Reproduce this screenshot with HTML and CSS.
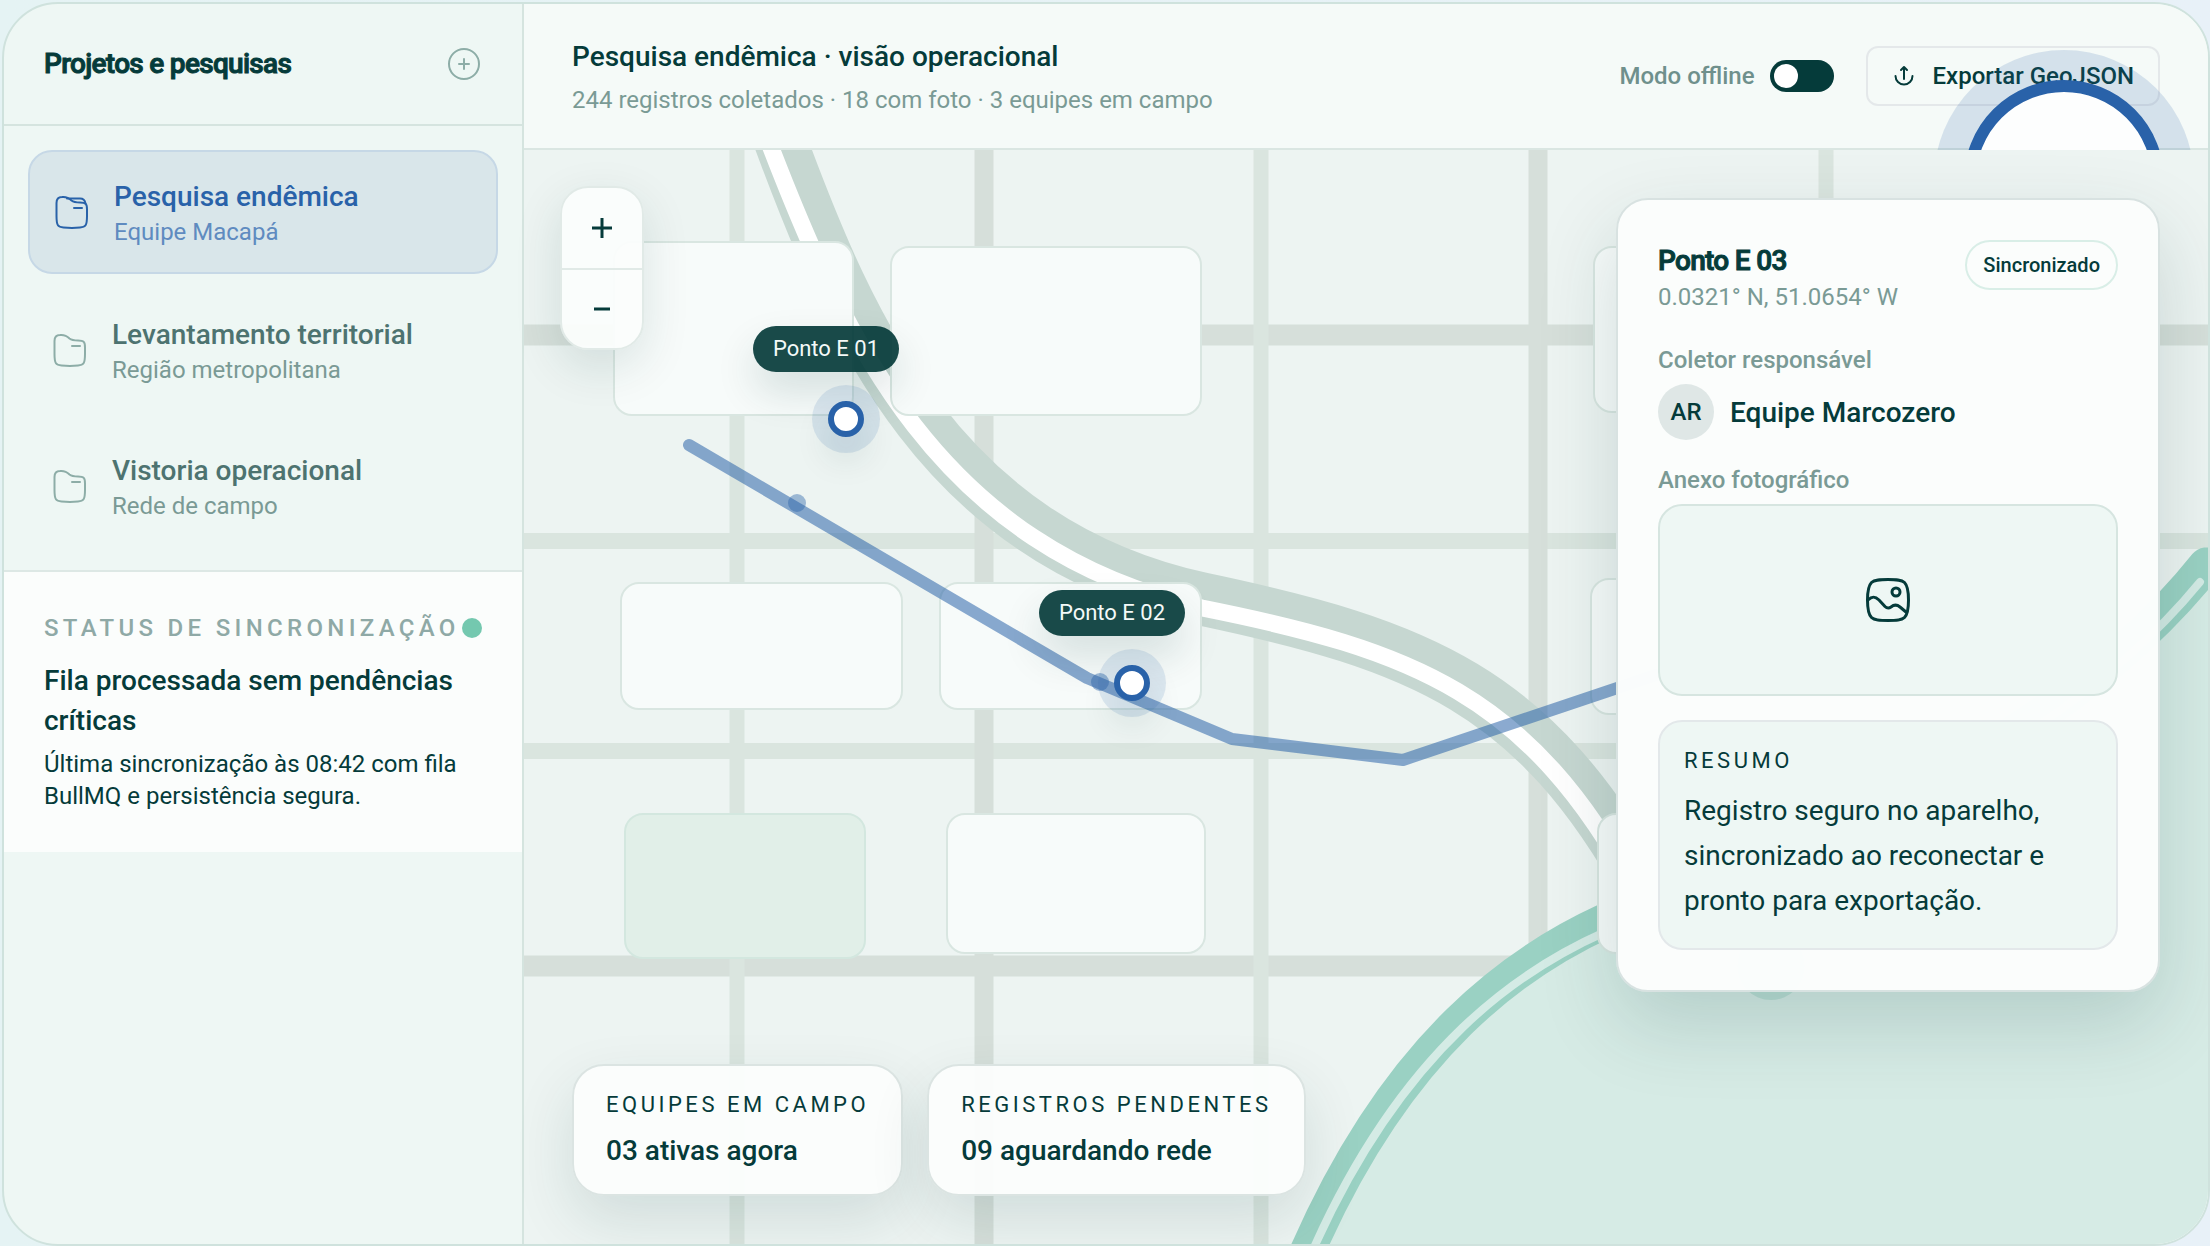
FILE: index.html
```html
<!DOCTYPE html>
<html lang="pt-BR">
<head>
<meta charset="utf-8">
<meta name="viewport" content="width=device-width, initial-scale=1">
<title>Pesquisa endêmica</title>
<link rel="stylesheet" href="styles.css">
</head>
<body>
<div class="app">
  <aside class="sidebar">
    <header class="sidebar-head">
      <h2 class="heading">Projetos e pesquisas</h2>
      <button class="icon-button" type="button" aria-label="Novo projeto">
        <svg class="icon" viewBox="0 0 36 36"><circle cx="18" cy="18" r="15"/><path d="M18 13v10M13 18h10"/></svg>
      </button>
    </header>
    <nav class="projects">
      <a class="project project-active" href="#endemica">
        <svg class="icon" viewBox="0 0 36 36"><path d="M2.500 9C2.500 5 4 3 8 3c5-.5 7 1 9.500 3.500C20 8.500 22 8.500 26 8.500c6 0 7 1.500 7 7V22c0 10-1.500 11-7 11.500-5 .5-11 .5-16.500 0C4 33 2.500 32 2.500 22z"/><path d="M13 4.500h13c4 0 5 2 5.500 5M20 14h8"/></svg>
        <span class="project-text"><span class="project-name">Pesquisa endêmica</span><span class="project-team">Equipe Macapá</span></span>
      </a>
      <a class="project" href="#territorial">
        <svg class="icon" viewBox="0 0 36 36"><path d="M2.500 9C2.500 5 4 3 8 3c5-.5 7 1 9.500 3.500C20 8.500 22 8.500 26 8.500c6 0 7 1.500 7 7V22c0 10-1.500 11-7 11.500-5 .5-11 .5-16.500 0C4 33 2.500 32 2.500 22z"/><path d="M20 14h8"/></svg>
        <span class="project-text"><span class="project-name">Levantamento territorial</span><span class="project-team">Região metropolitana</span></span>
      </a>
      <a class="project" href="#vistoria">
        <svg class="icon" viewBox="0 0 36 36"><path d="M2.500 9C2.500 5 4 3 8 3c5-.5 7 1 9.500 3.500C20 8.500 22 8.500 26 8.500c6 0 7 1.500 7 7V22c0 10-1.500 11-7 11.500-5 .5-11 .5-16.500 0C4 33 2.500 32 2.500 22z"/><path d="M20 14h8"/></svg>
        <span class="project-text"><span class="project-name">Vistoria operacional</span><span class="project-team">Rede de campo</span></span>
      </a>
    </nav>
    <section class="sync">
      <div class="sync-head"><span class="sync-label">STATUS DE SINCRONIZAÇÃO</span><span class="sync-dot"></span></div>
      <p class="sync-title">Fila processada sem pendências críticas</p>
      <p class="sync-note">Última sincronização às 08:42 com fila BullMQ e persistência segura.</p>
    </section>
  </aside>

  <main class="main">
    <header class="topbar">
      <div class="topbar-text">
        <h1 class="topbar-title">Pesquisa endêmica · visão operacional</h1>
        <p class="topbar-sub">244 registros coletados · 18 com foto · 3 equipes em campo</p>
      </div>
      <div class="topbar-actions">
        <div class="offline"><label for="offline">Modo offline</label><input class="switch" type="checkbox" id="offline"></div>
        <button class="export" type="button">
          <svg class="export-icon" viewBox="0 0 24 24"><path d="M12 15V3.500M9 6l3-3 3 3M3.500 12a8.500 8.500 0 0 0 17 0"/></svg>
          Exportar GeoJSON
        </button>
      </div>
      <span class="pulse"></span>
    </header>

    <section class="map">
      <svg class="map-canvas" viewBox="524 150 1684 1094" preserveAspectRatio="xMinYMin slice" aria-hidden="true">
        <g class="road-minor"><path d="M524 541h1684M524 751h1684"/></g>
        <g class="road-major"><path d="M524 335h1684M524 966h1684"/></g>
        <g class="street-minor"><path d="M737 150v1094M1261 150v1094M1826 150v1094"/></g>
        <g class="street-major"><path d="M984 150v1094M1538 150v1094"/></g>
        <path class="river" d="M780 140C850 330 942 542 1202 599C1420 645 1535 690 1645 890"/>
        <path class="river-line" d="M768 140C844 338 938 548 1202 608C1412 650 1530 694 1636 892"/>
        <path class="water" d="M1307 1252C1400 1040 1520 960 1605 921C1800 840 2050 760 2206 565L2230 560V1260H1307z"/>
        <path class="shore" d="M1307 1252C1400 1040 1520 960 1605 921C1800 840 2050 760 2206 565"/>
        <path class="shore-line" d="M1312 1252C1404 1044 1524 968 1605 932C1800 850 2050 765 2200 582"/>
        <g class="block">
          <rect x="614" y="242" width="239" height="173" rx="18"/>
          <rect x="891" y="247" width="310" height="168" rx="18"/>
          <rect x="621" y="583" width="281" height="126" rx="18"/>
          <rect x="940" y="583" width="261" height="126" rx="18"/>
          <rect x="947" y="814" width="258" height="139" rx="18"/>
          <rect x="1594" y="247" width="250" height="165" rx="18"/>
          <rect x="1591" y="579" width="250" height="135" rx="18"/>
          <rect x="1598" y="814" width="250" height="139" rx="18"/>
        </g>
        <rect class="park" x="625" y="814" width="240" height="144" rx="18"/>
        <path class="route" d="M689 445 1087 678 1232 739 1403 760 1656 675"/>
        <g class="stop"><circle cx="797" cy="503" r="9"/><circle cx="1100" cy="682" r="9"/></g>
        <circle class="base" cx="1771" cy="966" r="34"/>
      </svg>

      <div class="pin pin-one"><span class="pin-label">Ponto E 01</span><button class="pin-dot" type="button" aria-label="Ponto E 01"></button></div>
      <div class="pin pin-two"><span class="pin-label">Ponto E 02</span><button class="pin-dot" type="button" aria-label="Ponto E 02"></button></div>

      <div class="zoom">
        <button class="zoom-button" type="button" aria-label="Aproximar"><svg class="zoom-icon" viewBox="0 0 20 20"><path d="M10 0v20M0 10h20"/></svg></button>
        <button class="zoom-button" type="button" aria-label="Afastar"><svg class="zoom-icon" viewBox="0 0 20 20"><path d="M2 10h16"/></svg></button>
      </div>

      <div class="stats">
        <div class="stat"><span class="caps">EQUIPES EM CAMPO</span><strong class="stat-value">03 ativas agora</strong></div>
        <div class="stat"><span class="caps">REGISTROS PENDENTES</span><strong class="stat-value">09 aguardando rede</strong></div>
      </div>

      <article class="panel">
        <header class="panel-head">
          <div><h2 class="heading">Ponto E 03</h2><p class="coords">0.0321° N, 51.0654° W</p></div>
          <span class="badge">Sincronizado</span>
        </header>
        <div class="field field-collector">
          <span class="field-label">Coletor responsável</span>
          <div class="person"><span class="avatar">AR</span><span class="person-name">Equipe Marcozero</span></div>
        </div>
        <div class="field">
          <span class="field-label">Anexo fotográfico</span>
          <div class="photo">
            <svg class="photo-icon" viewBox="0 0 48 48"><path d="M24 3.500c8 0 13.500 0 16.500 3s4 8 4 17.500-1 14.500-4 17.500-8.500 3-16.500 3-13.500 0-16.500-3-4-8-4-17.500 1-14.500 4-17.500 8.500-3 16.500-3z"/><circle cx="32" cy="16" r="4"/><path d="M4 24c4-4 7-4 11 0l6 6.500c2 2 4 2 6 .5 3-2.500 6-2.500 9 0l6 5"/></svg>
          </div>
        </div>
        <section class="summary">
          <span class="caps">RESUMO</span>
          <p class="summary-text">Registro seguro no aparelho, sincronizado ao reconectar e pronto para exportação.</p>
        </section>
      </article>
    </section>
  </main>
</div>
</body>
</html>
```

FILE: styles.css
```css
:root {
  --ink: #053b3a;
  --muted: #7a9a95;
  --blue: #2962a9;
  --line: #d5e4df;
}

* { box-sizing: border-box; }

body {
  margin: 0;
  padding: 2px 0 0 2px;
  background: linear-gradient(90deg, #e5f3f4, #e8f1f8);
  color: var(--ink);
  font-family: Roboto, "Liberation Sans", sans-serif;
  font-size: 24px;
  line-height: 32px;
}

h1, h2, p { margin: 0; font-weight: 400; }

button { font: inherit; color: inherit; cursor: pointer; }

svg { display: block; fill: none; stroke: currentColor; stroke-linecap: round; stroke-linejoin: round; }

.app {
  display: grid;
  grid-template-columns: 520px minmax(0, 1fr);
  min-height: calc(100vh - 2px);
  overflow: hidden;
  border: 2px solid #cfe2dd;
  border-radius: 56px;
  background: #eef7f4;
}

.heading {
  font-size: 28px;
  line-height: 42px;
  font-weight: 500;
  letter-spacing: -0.025em;
  -webkit-text-stroke: 1px currentColor;
}

.icon { width: 36px; height: 36px; flex: none; stroke-width: 2; }

/* Sidebar */
.sidebar { border-right: 2px solid var(--line); }

.sidebar-head {
  display: flex;
  align-items: center;
  justify-content: space-between;
  height: 122px;
  padding: 0 40px;
  border-bottom: 2px solid var(--line);
}

.icon-button { padding: 0; border: 0; background: none; color: #8dada7; }

.projects { display: flex; flex-direction: column; gap: 16px; padding: 24px; }

.project {
  display: flex;
  align-items: center;
  gap: 24px;
  height: 120px;
  padding: 0 24px;
  color: #4d7370;
  text-decoration: none;
}

.project .icon { color: #8dada7; }
.project-text { display: flex; flex-direction: column; padding-top: 4px; }
.project-name { font-size: 28px; line-height: 36px; font-weight: 500; }
.project-team { color: var(--muted); line-height: 34px; }

.project-active {
  height: 124px;
  border: 2px solid #c6d8e6;
  border-radius: 24px;
  background: #d9e6ea;
  color: var(--blue);
}

.project-active .icon { color: var(--blue); }
.project-active .project-team { color: #5f8bc0; }

.sync { padding: 40px; border-top: 2px solid #dde8e5; background: #fbfdfc; }
.sync-head { display: flex; align-items: center; justify-content: space-between; margin-bottom: 17px; white-space: nowrap; }
.sync-label { color: #8fa9a6; font-weight: 500; letter-spacing: 0.18em; }
.sync-dot { flex: none; width: 20px; height: 20px; margin-left: -4px; border-radius: 50%; background: #74c8af; }
.sync-title { margin-bottom: 7px; font-size: 28px; line-height: 40px; font-weight: 500; }

/* Top bar */
.main { display: flex; flex-direction: column; min-width: 0; }

.topbar {
  position: relative;
  display: flex;
  align-items: center;
  justify-content: space-between;
  padding: 32px 48px;
  border-bottom: 2px solid #dae6e2;
  background: #f5faf8;
  clip-path: inset(0);
}

.topbar-title { margin-bottom: 6px; font-size: 28px; line-height: 42px; font-weight: 500; }
.topbar-sub { color: var(--muted); }
.topbar-actions { display: flex; align-items: center; gap: 32px; }
.offline { display: flex; align-items: center; gap: 15px; color: #6f908c; font-weight: 500; }

.switch {
  appearance: none;
  display: flex;
  align-items: center;
  width: 64px;
  height: 32px;
  margin: 0;
  padding: 4px;
  border-radius: 16px;
  background: var(--ink);
}

.switch::before { content: ""; width: 24px; height: 24px; border-radius: 50%; background: #fff; }

.export {
  display: flex;
  align-items: center;
  gap: 17px;
  height: 60px;
  padding: 0 24px;
  border: 2px solid #e4e8ea;
  border-radius: 12px;
  background: none;
  font-weight: 500;
}

.export-icon { width: 24px; height: 24px; stroke-width: 2; }

.pulse {
  position: absolute;
  top: 76px;
  right: 44px;
  width: 200px;
  height: 200px;
  border: 12px solid var(--blue);
  border-radius: 50%;
  background: #fdfefe;
  box-shadow: 0 0 0 30px rgba(41, 98, 169, .16);
}

/* Map */
.map {
  position: relative;
  flex: 1;
  display: flex;
  align-items: flex-start;
  justify-content: flex-end;
  min-height: 900px;
  padding: 48px;
  background: #edf4f2;
}

.map-canvas { position: absolute; inset: 0; width: 100%; height: 100%; }
.road-minor { stroke: #dae5df; stroke-width: 16; }
.road-major { stroke: #d6dfda; stroke-width: 21; }
.street-minor { stroke: #dae5df; stroke-width: 15; }
.street-major { stroke: #d6dfda; stroke-width: 19; }
.river { stroke: #c6d7d1; stroke-width: 53; }
.river-line { stroke: #fff; stroke-width: 17; }
.water { fill: #d6ebe5; stroke: none; }
.shore { stroke: #9ad1c3; stroke-width: 35; }
.shore-line { stroke: #d4ebe5; stroke-width: 8; }
.block { fill: #f7fbfa; stroke: #d9e6e1; stroke-width: 2; }
.park { fill: #e1efe8; stroke: #d3e7df; stroke-width: 2; }
.route { stroke: var(--blue); stroke-width: 12; opacity: .54; }
.stop { fill: var(--blue); stroke: none; opacity: .42; }
.base { fill: #bcdfd5; stroke: none; }

.pin { position: absolute; display: grid; justify-items: center; row-gap: 29px; width: 146px; }
.pin-one { left: 229px; top: 176px; }
.pin-two { left: 515px; top: 440px; }

.pin-label {
  padding: 7px 0;
  width: 146px;
  border-radius: 23px;
  background: rgba(5, 59, 58, .92);
  box-shadow: 0 20px 40px rgba(5, 59, 58, .14);
  color: #f4f9f8;
  font-size: 22px;
  text-align: center;
}

.pin-dot {
  width: 36px;
  height: 36px;
  margin-left: 40px;
  padding: 0;
  border: 6px solid var(--blue);
  border-radius: 50%;
  background: #fff;
  box-shadow: 0 0 0 16px rgba(41, 98, 169, .13), 0 20px 36px rgba(5, 59, 58, .14);
}

.zoom {
  position: absolute;
  left: 36px;
  top: 36px;
  width: 84px;
  overflow: hidden;
  border: 2px solid #e1eae7;
  border-radius: 28px;
  background: rgba(251, 253, 252, .95);
  box-shadow: 0 16px 48px rgba(5, 59, 58, .12);
}

.zoom-button { display: grid; place-items: center; width: 100%; height: 80px; padding: 0; border: 0; background: none; }
.zoom-button + .zoom-button { border-top: 2px solid #e1eae7; }
.zoom-icon { width: 20px; height: 20px; stroke-width: 3; stroke-linecap: butt; }

.stats { position: absolute; left: 48px; bottom: 48px; display: flex; gap: 24px; }

.stat {
  display: grid;
  gap: 10px;
  padding: 24px 32px 22px;
  border: 2px solid #dbe4e2;
  border-radius: 32px;
  background: rgba(251, 253, 252, .97);
  box-shadow: 0 24px 60px rgba(5, 59, 58, .12);
}

.caps { font-size: 22px; line-height: 30px; letter-spacing: 0.16em; white-space: nowrap; }
.stat-value { font-size: 28px; line-height: 42px; font-weight: 500; }

/* Detail panel */
.panel {
  position: relative;
  width: 544px;
  padding: 40px;
  border: 2px solid #d8e2e1;
  border-radius: 32px;
  background: rgba(251, 253, 252, .99);
  box-shadow: 0 32px 80px rgba(5, 59, 58, .16);
}

.panel-head { display: flex; align-items: flex-start; justify-content: space-between; }
.coords { color: var(--muted); line-height: 30px; }

.badge {
  padding: 7px 16px;
  border: 2px solid #d9eee7;
  border-radius: 25px;
  font-size: 20px;
  font-weight: 500;
}

.field { display: grid; gap: 8px; margin-top: 24px; }
.field-collector { margin-top: 32px; }
.field-label { color: var(--muted); font-weight: 500; }
.person { display: flex; align-items: center; gap: 16px; }
.person-name { font-size: 28px; line-height: 34px; padding-top: 2px; font-weight: 500; }

.avatar {
  display: grid;
  place-items: center;
  width: 56px;
  height: 56px;
  border-radius: 50%;
  background: #dfe7e6;
  font-weight: 500;
}

.photo {
  display: grid;
  place-items: center;
  height: 192px;
  border: 2px solid #d6e5e0;
  border-radius: 24px;
  background: #eef7f4;
}

.photo-icon { width: 48px; height: 48px; stroke-width: 3; }

.summary {
  display: grid;
  gap: 12px;
  margin-top: 24px;
  padding: 24px 24px 25px;
  border: 2px solid #e3e8ea;
  border-radius: 24px;
  background: #eef7f4;
}

.summary-text { font-size: 28px; line-height: 45px; }
```
